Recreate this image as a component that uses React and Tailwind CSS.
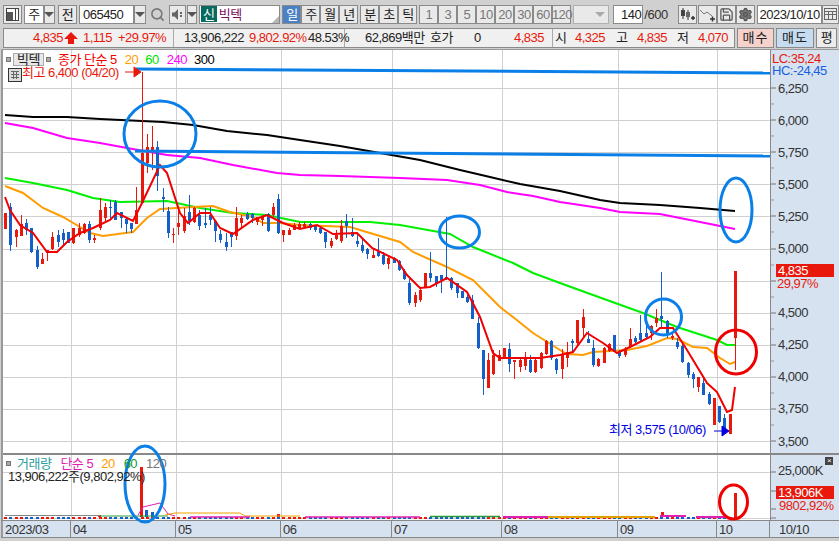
import { Search, Save, Settings } from 'lucide-react'

const FONT = "font-['Liberation_Sans','Noto_Sans_CJK_KR',sans-serif]"
const RED = '#e8190c'
const BLUE = '#1560c8'

// color, wick top, body top, body bottom, wick bottom
const CANDLES = [
  ['r',213,213,229,229],['b',203,207,245,251],['r',229,230,237,247],['r',215,224,236,236],['b',219,223,230,235],
  ['b',228,228,252,253],['b',246,250,267,269],['r',253,259,264,264],['r',250,250,253,261],['r',232,237,249,250],
  ['b',230,235,242,247],['b',229,233,240,246],['b',232,232,243,243],['r',228,228,243,244],['r',223,228,235,237],
  ['r',223,224,233,234],['b',221,224,240,243],['r',235,238,240,243],['r',198,210,228,230],['r',203,207,218,223],
  ['b',200,207,208,218],['b',200,202,220,220],['b',212,212,218,228],['b',218,219,224,233],['b',223,223,229,233],
  ['r',187,210,224,224],['r',72,153,203,203],['r',134,147,163,173],['r',126,147,150,170],['b',141,147,176,191],
  ['b',188,197,199,212],['b',207,211,233,238],['r',228,234,235,243],['r',210,223,227,235],['r',208,216,231,233],
  ['b',195,212,221,225],['r',207,208,222,223],['b',210,215,226,230],['b',208,223,225,228],['b',207,215,220,225],
  ['b',220,221,231,242],['b',230,234,240,243],['b',233,242,247,251],['b',232,232,237,247],['r',207,218,236,240],
  ['r',215,218,223,228],['b',212,214,219,220],['b',213,214,218,223],['r',217,217,222,225],['r',215,216,220,226],
  ['b',213,214,231,232],['r',203,207,215,217],['b',194,199,233,234],['r',230,230,235,242],['r',228,230,235,235],
  ['r',223,225,230,230],['r',222,224,228,229],['r',222,224,227,228],['b',223,224,228,230],['b',225,225,230,232],
  ['b',227,228,233,234],['b',232,232,242,248],['r',238,241,246,248],['r',230,235,239,240],['r',220,226,241,243],
  ['b',214,221,226,238],['b',218,232,236,237],['b',233,241,244,247],['b',239,245,251,253],['b',248,249,254,259],
  ['r',248,255,258,258],['b',238,251,256,257],['b',252,255,264,265],['r',257,258,264,269],['b',257,258,263,263],
  ['b',260,261,270,271],['b',269,271,279,280],['b',279,283,303,305],['r',292,295,303,307],['r',287,290,300,302],
  ['r',273,273,288,288],['b',252,273,278,282],['b',276,276,283,287],['b',275,275,280,293],['b',217,277,279,280],
  ['b',277,278,288,290],['b',283,283,293,298],['b',291,291,298,298],['b',295,297,302,303],['b',295,300,319,319],
  ['b',317,323,348,349],['b',350,350,379,395],['r',353,360,388,388],['r',350,355,374,375],['r',350,355,361,361],
  ['r',348,348,358,358],['b',343,349,364,372],['r',360,360,362,379],['r',357,360,367,372],['r',352,358,366,370],
  ['b',355,360,372,373],['r',359,360,372,373],['r',352,353,368,369],['r',340,341,354,355],['b',340,341,358,360],
  ['b',358,359,370,374],['r',349,355,369,379],['r',342,352,358,367],['b',339,341,343,353],['r',320,320,343,345],
  ['r',309,317,328,337],['b',331,339,343,343],['b',340,348,365,367],['r',358,359,366,367],['r',347,348,363,363],
  ['r',343,344,351,352],['b',335,335,352,352],['b',350,352,356,358],['r',347,349,355,357],['r',328,339,347,347],
  ['b',336,338,342,343],['b',315,333,340,341],['b',323,333,337,338],['r',325,326,333,340],['r',309,318,323,327],
  ['b',272,316,319,327],['b',320,321,334,338],['r',334,336,338,340],['b',338,342,347,349],['b',343,346,362,363],
  ['b',362,363,375,378],['b',372,374,379,388],['r',377,377,387,392],['b',377,383,395,395],['b',392,394,404,405],
  ['r',398,398,425,425],['b',406,406,422,423],['b',414,418,428,430],['r',414,414,434,434],['r',271,271,338,370],
]

const MA300 = '5,115 33,117 67,117 100,119 163,122 193,125 227,131 267,135 300,140 340,146 380,153 420,160 460,170 490,177 520,184 560,191 600,200 620,203 660,205 700,208 735,211'
const MA240 = '5,123 33,128 67,138 100,143 127,148 167,155 200,158 233,165 277,173 300,175 340,176 400,178 447,180 480,185 507,192 533,196 560,202 600,208 620,212 660,214 700,222 735,229'
const MA60 = '5,178 33,183 67,190 93,198 120,202 167,201 200,208 233,213 267,215 300,222 370,222 400,225 450,234 473,247 513,263 533,273 560,283 593,295 643,313 677,327 717,340 727,345 735,345'
const MA20 = '5,186 23,193 43,208 63,217 80,227 90,233 103,236 133,232 147,218 160,209 193,207 213,206 230,212 253,217 263,223 280,223 300,225 350,227 370,233 400,242 413,252 447,267 473,280 500,307 513,317 533,333 560,350 567,354 583,355 593,352 627,350 647,346 667,338 677,339 693,347 707,348 720,358 730,364 735,362'
const MA5 = '5,197 10,210 20,225 33,233 47,252 57,252 67,242 80,233 93,228 110,220 117,213 133,221 142,203 160,165 167,173 180,213 188,223 200,213 210,213 220,228 233,234 253,220 267,215 283,223 300,229 317,225 333,234 357,233 372,248 397,260 407,275 420,288 430,287 447,278 467,292 480,317 493,353 500,358 540,358 560,355 573,352 587,333 603,343 617,353 630,347 650,337 660,328 673,328 687,350 707,383 717,392 727,412 732,410 735,387'

const H_GRID = [88, 120, 152, 184, 216, 249, 281, 313, 345, 377, 409, 441]
const V_GRID = [71, 176, 281, 392, 502, 618, 717]
// 4,750 sits under the current price flag, the chart does not print it
const PRICES = ['6,250', '6,000', '5,750', '5,500', '5,250', '5,000', '', '4,500', '4,250', '4,000', '3,750', '3,500']
const X_CELLS = [['2023/03', 68], ['04', 105], ['05', 105], ['06', 111], ['07', 110], ['08', 116], ['09', 99], ['10', 53]]

const barX = (i) => Math.round(5 + i * 5.25)

function Caret({ color = '#555' }) {
  return <span className="block w-0 h-0 border-x-[5px] border-x-transparent border-t-[5px]" style={{ borderTopColor: color }} />
}

function Btn({ w = 'w-[19px]', children, className = '' }) {
  return (
    <div className={`${w} h-[19px] shrink-0 flex items-center justify-center bg-[#e9e9e9] border border-[#8a8a8a] text-[#222] ${className}`}>
      {children}
    </div>
  )
}

function Toolbar() {
  const periods = ['1', '3', '5', '10', '20', '30', '60', '120']
  return (
    <div className="flex items-center h-[27px] pl-[3px] pt-[1px]">
      <Btn>
        <svg width="15" height="15" viewBox="0 0 15 15">
          <rect x="1.5" y="1.5" width="12" height="12" fill="#fff" stroke="#444" />
          <rect x="2" y="5" width="6" height="8" fill="#555" />
          <rect x="10" y="2" width="1" height="11" fill="#444" />
        </svg>
      </Btn>
      <div className="ml-[2px] w-[20px] h-[19px] bg-white border border-[#8a8a8a] flex items-center justify-center">주</div>
      <Btn w="w-[11px]"><Caret /></Btn>
      <Btn className="ml-[3px]">전</Btn>
      <div className="ml-[2px] w-[55px] h-[19px] bg-white border border-[#8a8a8a] pl-[3px] flex items-center">065450</div>
      <Btn w="w-[12px]"><Caret /></Btn>
      <div className="ml-[3px] w-[17px] h-[19px] flex items-center justify-center">
        <Search size={15} color="#777" strokeWidth={2.5} />
      </div>
      <Btn w="w-[17px]" className="ml-[3px]">
        <svg width="13" height="13" viewBox="0 0 13 13">
          <path d="M1 4.5h2.5L7 1v11L3.5 8.5H1z" fill="#666" />
          <rect x="9" y="4" width="2" height="2" fill="#666" />
          <rect x="9" y="7" width="2" height="2" fill="#666" />
        </svg>
      </Btn>
      <Btn w="w-[10px]" className="ml-[1px]"><Caret /></Btn>
      <div className="relative ml-[2px] w-[82px] h-[19px] bg-white border border-[#8a8a8a] flex items-center pl-[1px] gap-[2px]">
        <span className="w-[16px] h-[16px] bg-[#066a5e] text-white flex items-center justify-center">신</span>
        <span className="text-[#7b0f5f]">빅텍</span>
        <span className="absolute right-0 bottom-0 w-0 h-0 border-l-[7px] border-l-transparent border-b-[7px] border-b-[#b5b5b5]" />
      </div>
      <Btn className="ml-[2px] !bg-[#4a80c4] !text-white">일</Btn>
      <Btn>주</Btn>
      <Btn>월</Btn>
      <Btn>년</Btn>
      <Btn className="ml-[2px]">분</Btn>
      <Btn>초</Btn>
      <Btn>틱</Btn>
      <div className="ml-[2px] flex">
        {periods.map((p) => (
          <Btn key={p} className="!text-[#777]">{p}</Btn>
        ))}
      </div>
      <div className="ml-[2px] w-[36px] h-[19px] bg-[#e9e9e9] border border-[#b0b0b0] flex items-center justify-end pr-[3px]">
        <Caret color="#aaa" />
      </div>
      <div className="ml-[4px] w-[30px] h-[19px] bg-white border border-[#8a8a8a] flex items-center justify-end pr-[1px]">140</div>
      <span className="w-[35px] pl-[1px] text-[#333]">/600</span>
      <Btn>
        <svg width="17" height="15" viewBox="0 0 17 15">
          <path d="M4 1v11M9 3v10" stroke="#333" />
          <rect x="2" y="3" width="4" height="6" fill="#444" />
          <rect x="7" y="5" width="4" height="5" fill="#666" />
          <path d="M12 11h4M14 9v4" stroke="#333" strokeWidth="1.5" />
        </svg>
      </Btn>
      <Btn className="ml-[1px]">
        <svg width="17" height="15" viewBox="0 0 17 15" fill="none">
          <path d="M1 3l4 4 3-2 5 4" stroke="#777" />
          <path d="M11 12h5M13.5 9.500v5" stroke="#333" strokeWidth="1.5" />
        </svg>
      </Btn>
      <Btn><Save size={15} color="#555" strokeWidth={2} /></Btn>
      <Btn><Settings size={15} color="#555" fill="#777" strokeWidth={2} /></Btn>
      <div className="ml-[2px] w-[65px] h-[19px] bg-white border border-[#8a8a8a] flex items-center justify-center">2023/10/10</div>
      <Btn w="w-[17px]">
        <svg width="13" height="12" viewBox="0 0 13 12" fill="none" stroke="#666">
          <rect x="0.5" y="0.5" width="12" height="11" />
          <path d="M0.5 3.500h12M0.5 6.500h12M4.500 3.500v8M8.500 3.500v8" />
        </svg>
      </Btn>
    </div>
  )
}

function InfoRow() {
  return (
    <div className="flex items-center h-[21px] pl-[3px]">
      <div className="flex items-center w-[732px] h-[20px] bg-[#f0f0f0] border border-[#8a8a8a] text-[#e8190c]">
        <div className="w-[170px] flex items-center shrink-0 border-r border-[#aaa] h-full">
          <span className="ml-[29px] w-[30px]">4,835</span>
          <svg width="16" height="14" viewBox="0 0 16 14">
            <path d="M8 1l7 7h-4v5H5V8H1z" fill={RED} />
          </svg>
          <span className="ml-[1px] w-[32px] text-right">1,115</span>
          <span className="ml-[6px] w-[42px]">+29.97%</span>
        </div>
        <div className="w-[171px] flex items-center shrink-0 border-r border-[#aaa] h-full">
          <span className="ml-[10px] w-[60px] text-[#222]">13,906,222</span>
          <span className="ml-[5px] w-[54px]">9,802.92%</span>
          <span className="ml-[5px] text-[#222]">48.53%</span>
        </div>
        <div className="flex items-center w-[208px] shrink-0 border-r border-[#aaa] h-full">
          <span className="ml-[20px] w-[65px] text-[#222]">62,869백만</span>
          <span className="w-[24px] text-[#222]">호가</span>
          <span className="ml-[20px] w-[8px] text-[#222]">0</span>
          <span className="ml-[32px]">4,835</span>
        </div>
        <span className="ml-[2px] w-[12px] text-[#222]">시</span>
        <span className="ml-[8px] w-[30px]">4,325</span>
        <span className="ml-[11px] w-[12px] text-[#222]">고</span>
        <span className="ml-[9px] w-[30px]">4,835</span>
        <span className="ml-[10px] w-[12px] text-[#222]">저</span>
        <span className="ml-[9px] w-[30px]">4,070</span>
      </div>
      <div className="ml-[2px] w-[37px] h-[20px] bg-[#f5d2cb] border border-[#8a8a8a] flex items-center justify-center tracking-[1px]">매수</div>
      <div className="ml-[2px] w-[38px] h-[20px] bg-[#c5dcf1] border border-[#8a8a8a] flex items-center justify-center tracking-[1px]">매도</div>
      <div className="ml-[2px] w-[21px] h-[20px] bg-[#ececec] border border-[#8a8a8a] flex items-center justify-center">평</div>
    </div>
  )
}

function PriceSvg() {
  return (
    <svg viewBox="3 50 767 403" width="767" height="403" className="block">
      <g stroke="#d0d0d0" strokeWidth="1" shapeRendering="crispEdges">
        {H_GRID.map((y) => <line key={y} x1="3" x2="770" y1={y} y2={y} />)}
        {V_GRID.map((x) => <line key={x} x1={x} x2={x} y1="50" y2="453" />)}
      </g>
      <polyline points={MA300} fill="none" stroke="#000" strokeWidth="2" />
      <polyline points={MA240} fill="none" stroke="#ff00ff" strokeWidth="2" />
      <polyline points={MA60} fill="none" stroke="#00f000" strokeWidth="2" />
      <polyline points={MA20} fill="none" stroke="#ff9c00" strokeWidth="2" />
      <g shapeRendering="crispEdges">
        {CANDLES.map(([c, hi, top, bot, lo], i) => {
          const x = barX(i)
          const fill = c === 'r' ? RED : BLUE
          return (
            <g key={i} fill={fill}>
              <rect x={x} y={hi} width="1" height={lo - hi} />
              <rect x={x - 1} y={top} width="3" height={Math.max(bot - top, 1)} />
            </g>
          )
        })}
      </g>
      <polyline points={MA5} fill="none" stroke="#f00000" strokeWidth="2" />
      <line x1="136" y1="69" x2="770" y2="73" stroke="#0a7fe8" strokeWidth="3" />
      <line x1="135" y1="151" x2="770" y2="156" stroke="#0a7fe8" strokeWidth="3" />
      <g fill="none" stroke="#0a7fe8" strokeWidth="3">
        <ellipse cx="160" cy="134" rx="36" ry="33" />
        <ellipse cx="459.500" cy="232" rx="20" ry="16" />
        <ellipse cx="663.500" cy="317" rx="18" ry="18" />
        <ellipse cx="736" cy="210" rx="16" ry="32" />
      </g>
      <ellipse cx="736" cy="352" rx="20.500" ry="22" fill="none" stroke="#f00000" strokeWidth="3" />
      <path d="M125 72h9M134 67l7 5-7 5z" stroke={RED} fill={RED} />
      <path d="M714 431h8M722 426l7 5-7 5z" stroke="#0000e0" fill="#0000e0" />
    </svg>
  )
}

function VolumeSvg() {
  return (
    <svg viewBox="3 455 767 65" width="767" height="65" className="block overflow-visible">
      <g stroke="#d0d0d0" strokeWidth="1" shapeRendering="crispEdges">
        <line x1="3" x2="770" y1="472" y2="472" />
        <line x1="3" x2="770" y1="518" y2="518" />
        {V_GRID.map((x) => <line key={x} x1={x} x2={x} y1="455" y2="520" />)}
      </g>
      <g shapeRendering="crispEdges">
        {CANDLES.map(([c], i) => (
          <rect key={i} x={barX(i) - 1} y="517" width="3" height="2" fill={c === 'r' ? RED : BLUE} />
        ))}
        <rect x="140" y="467" width="3" height="50" fill={RED} />
        <rect x="145" y="510" width="3" height="7" fill={BLUE} />
        <rect x="151" y="512" width="3" height="5" fill={BLUE} />
        <rect x="277" y="514" width="3" height="3" fill={RED} />
        <rect x="98" y="515" width="3" height="2" fill={RED} />
        <rect x="661" y="512" width="3" height="5" fill={RED} />
        <rect x="734" y="493" width="3" height="24" fill={RED} />
      </g>
      <g fill="none" strokeWidth="1">
        <polyline points="5,515.500 100,515.500" stroke="#888" />
        <polyline points="100,516 168,516" stroke="#2a9a3a" />
        <polyline points="138,515 143,507 160,503 168,514 175,516" stroke="#e020b0" />
        <polyline points="165,515 175,513 240,513 245,516 300,516" stroke="#f0a000" />
        <polyline points="190,517 250,517" stroke="#e020b0" strokeWidth="1.500" />
        <polyline points="305,517 330,517 370,517 420,517" stroke="#e020b0" strokeWidth="1.500" />
        <polyline points="430,516.500 500,516.500" stroke="#2a9a3a" strokeWidth="1.500" />
        <polyline points="503,517 548,517" stroke="#e020b0" strokeWidth="2" />
        <polyline points="548,517 655,517" stroke="#e0a000" strokeWidth="2" />
        <polyline points="660,516 686,516" stroke="#e020b0" strokeWidth="2" />
        <polyline points="696,517 728,517" stroke="#e020b0" strokeWidth="2" />
      </g>
      <ellipse cx="145" cy="484" rx="20" ry="38" fill="none" stroke="#0a7fe8" strokeWidth="3" />
      <ellipse cx="733.500" cy="502" rx="14" ry="17" fill="none" stroke="#f00000" strokeWidth="3" />
    </svg>
  )
}

function PriceAxis() {
  return (
    <div className="relative h-[403px] pt-[22px] pl-[7px] border-l border-[#888] text-[#333]">
      <svg className="absolute left-0 top-0" width="6" height="403">
        {H_GRID.map((y) => <line key={y} x1="0" x2="5" y1={y - 50} y2={y - 50} stroke="#777" />)}
        {H_GRID.map((y) => <line key={y} x1="0" x2="3" y1={y - 34} y2={y - 34} stroke="#999" />)}
      </svg>
      <div className="absolute left-[1px] top-[3px] leading-[12px] z-10">
        <div className="text-[#e8190c]">LC:35,24</div>
        <div className="text-[#1560e0]">HC:-24,45</div>
      </div>
      {PRICES.map((p, i) => (
        <div key={i} className="h-[32.1px] flex items-center">{p}</div>
      ))}
      <div className="absolute left-[5px] top-[214px] w-[58px] h-[13px] bg-[#e8190c] text-white leading-[13px] pl-[2px]">4,835</div>
      <div className="absolute left-[6px] top-[227px] text-[#e8190c] leading-[13px]">29,97%</div>
    </div>
  )
}

function VolumeAxis() {
  return (
    <div className="relative h-[65px] pt-[9px] pl-[7px] border-l border-[#888] text-[#333]">
      <svg className="absolute left-0 top-0" width="6" height="65">
        {[17, 36, 54, 63].map((y) => <line key={y} x1="0" x2="5" y1={y} y2={y} stroke="#777" />)}
      </svg>
      <div className="absolute right-[6px] top-[2px] w-[8px] h-[8px] bg-[#444] text-white text-[8px] leading-[8px] text-center">×</div>
      <div className="leading-[14px]">25,000K</div>
      <div className="absolute left-[5px] top-[31px] w-[58px] h-[13px] bg-[#e8190c] text-white leading-[13px] pl-[2px]">13,906K</div>
      <div className="absolute left-[8px] top-[44px] text-[#e8190c] leading-[13px]">9802,92%</div>
    </div>
  )
}

export default function App() {
  return (
    <div className={`${FONT} w-[839px] h-[541px] overflow-hidden bg-[#d0d0d0] text-[13px] tracking-[-0.5px] leading-none text-[#222]`}>
      <Toolbar />
      <InfoRow />
      <div className="flex mt-[1px] ml-[1px] border-t border-[#999]">
        <div className="w-[2px] bg-[#999]" />
        <div className="w-[767px] bg-white">
          <div className="relative h-[403px]">
            <PriceSvg />
            <div className="absolute left-[3px] top-[3px] flex items-center h-[13px]">
              <span className="w-[5px] h-[5px] bg-[#aaa] border border-[#777]" />
              <span className="ml-[2px] w-[31px] h-[13px] bg-[#e8e8e8] border border-[#aaa] flex items-center justify-center">빅텍</span>
              <span className="ml-[2px] w-[5px] h-[5px] bg-[#aaa] border border-[#777]" />
              <span className="ml-[7px] text-[#f00000]">종가 단순 5</span>
              <span className="ml-[8px] text-[#ff9c00]">20</span>
              <span className="ml-[7px] text-[#00e000]">60</span>
              <span className="ml-[8px] text-[#ff00ff]">240</span>
              <span className="ml-[7px] text-black">300</span>
            </div>
            <svg className="absolute left-[5px] top-[18px]" width="14" height="14" viewBox="0 0 14 14" fill="#ddd" stroke="#333">
              <rect x="0.500" y="0.500" width="13" height="13" />
              <path d="M3 3.500h8M3 6.500h8M3 9.500h8M5.500 3v8M8.500 3v8" stroke="#666" />
            </svg>
            <span className="absolute left-[19px] top-[16px] text-[#e8190c] leading-[13px] whitespace-nowrap">최고 6,400 (04/20)</span>
            <span className="absolute left-[606px] top-[373px] text-[#0000e0] leading-[13px] whitespace-nowrap">최저 3,575 (10/06)</span>
          </div>
          <div className="relative z-10 border-t-2 border-[#888] h-[67px]">
            <VolumeSvg />
            <div className="absolute left-[3px] top-[1px] flex items-center h-[14px]">
              <span className="w-[5px] h-[5px] bg-[#aaa] border border-[#777]" />
              <span className="ml-[6px] text-[#2a9d9d]">거래량</span>
              <span className="ml-[9px] text-[#e020b0]">단순 5</span>
              <span className="ml-[8px] text-[#ff9c00]">20</span>
              <span className="ml-[9px] text-[#109a30]">60</span>
              <span className="ml-[9px] text-[#777]">120</span>
            </div>
            <span className="absolute left-[5px] top-[15px] leading-[13px] whitespace-nowrap">13,906,222주(9,802,92%)</span>
          </div>
        </div>
        <div className="w-[69px] bg-[#d6e2f0]">
          <PriceAxis />
          <div className="border-t-2 border-[#888]">
            <VolumeAxis />
          </div>
        </div>
      </div>
      <div className="flex ml-[1px] h-[18px] border-y border-[#888] bg-[#d6e2f0] text-[#333]">
        <div className="w-[2px] bg-[#999]" />
        {X_CELLS.map(([label, w]) => (
          <div key={label} className="pl-[2px] border-r border-[#888] flex items-center" style={{ width: w }}>{label}</div>
        ))}
        <div className="flex-1 pl-[9px] flex items-center">10/10</div>
      </div>
    </div>
  )
}
